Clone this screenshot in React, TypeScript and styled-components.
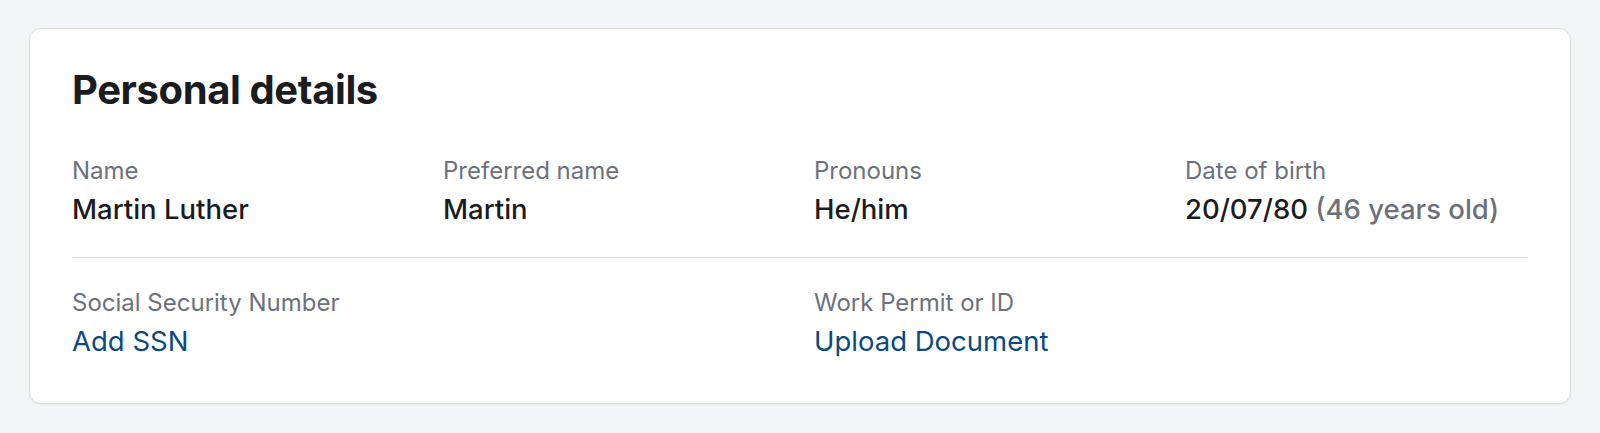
import React from 'react';
import styled, { createGlobalStyle } from 'styled-components';

const GlobalStyle = createGlobalStyle`
  html, body {
    margin: 0;
    padding: 0;
    background: #f4f5f8;
    font-family: Inter, "Noto Sans", "Liberation Sans", sans-serif;
  }
`;

const Page = styled.div`
  padding: 28px 29px;
`;

const Card = styled.section`
  background: #ffffff;
  border: 1px solid #dcdee3;
  border-radius: 12px;
  box-shadow: 0 1px 2px rgba(16, 24, 40, 0.06);
  padding: 37px 42px 44px;
`;

const Title = styled.h2`
  margin: 0 0 41px;
  font-size: 40px;
  font-weight: 700;
  line-height: 48px;
  color: #1b1c1f;
  letter-spacing: -0.01em;
`;

const FieldGrid = styled.div`
  display: grid;
  grid-template-columns: repeat(4, 1fr);
  column-gap: 28px;
`;

const Field = styled.div<{ $span?: number }>`
  grid-column: span ${(p) => p.$span ?? 1};
  display: flex;
  flex-direction: column;
  gap: 4px;
`;

const Label = styled.span`
  font-size: 24px;
  line-height: 32px;
  color: #6d717b;
`;

const Value = styled.span`
  font-size: 27.5px;
  line-height: 36px;
  font-weight: 500;
  color: #1b1c1f;
`;

const Muted = styled.span`
  color: #6d717b;
`;

const LinkValue = styled.a`
  font-size: 27.5px;
  line-height: 36px;
  font-weight: 400;
  color: #0b4a7f;
  text-decoration: none;
  cursor: pointer;
`;

const Divider = styled.hr`
  grid-column: 1 / -1;
  border: none;
  border-top: 1px solid #d9dbe0;
  margin: 30px 0 29px;
`;

const App: React.FC = () => {
  return (
    <>
      <GlobalStyle />
      <Page>
        <Card>
          <Title>Personal details</Title>
          <FieldGrid>
            <Field>
              <Label>Name</Label>
              <Value>Martin Luther</Value>
            </Field>
            <Field>
              <Label>Preferred name</Label>
              <Value>Martin</Value>
            </Field>
            <Field>
              <Label>Pronouns</Label>
              <Value>He/him</Value>
            </Field>
            <Field>
              <Label>Date of birth</Label>
              <Value>
                20/07/80 <Muted>(46 years old)</Muted>
              </Value>
            </Field>
            <Divider />
            <Field $span={2}>
              <Label>Social Security Number</Label>
              <LinkValue>Add SSN</LinkValue>
            </Field>
            <Field $span={2}>
              <Label>Work Permit or ID</Label>
              <LinkValue>Upload Document</LinkValue>
            </Field>
          </FieldGrid>
        </Card>
      </Page>
    </>
  );
};

export default App;
